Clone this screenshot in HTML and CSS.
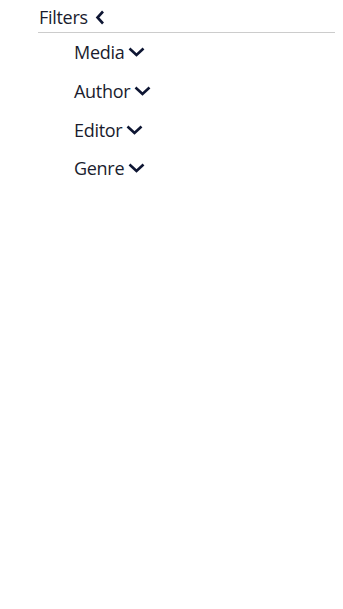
FILE: index.html
```html
<!DOCTYPE html>
<html lang="en">
<head>
<meta charset="utf-8">
<title>Filters</title>
<link rel="stylesheet" href="styles.css">
</head>
<body>
<nav class="filters">
  <div class="filters-head">
    <span class="label">Filters</span>
    <svg class="chev-left" width="10" height="15" viewBox="0 0 10 15"><path d="M8 1.5 L2.5 7.5 L8 13.5" fill="none" stroke="#0e1633" stroke-width="2.6"/></svg>
  </div>
  <ul class="filter-list">
    <li class="filter-item"><span class="label">Media</span><svg class="chev-down" width="17" height="10" viewBox="0 0 17 10"><path d="M1.5 1.5 L8.5 8 L15.5 1.5" fill="none" stroke="#0e1633" stroke-width="2.6"/></svg></li>
    <li class="filter-item"><span class="label">Author</span><svg class="chev-down" width="17" height="10" viewBox="0 0 17 10"><path d="M1.5 1.5 L8.5 8 L15.5 1.5" fill="none" stroke="#0e1633" stroke-width="2.6"/></svg></li>
    <li class="filter-item"><span class="label">Editor</span><svg class="chev-down" width="17" height="10" viewBox="0 0 17 10"><path d="M1.5 1.5 L8.5 8 L15.5 1.5" fill="none" stroke="#0e1633" stroke-width="2.6"/></svg></li>
    <li class="filter-item"><span class="label">Genre</span><svg class="chev-down" width="17" height="10" viewBox="0 0 17 10"><path d="M1.5 1.5 L8.5 8 L15.5 1.5" fill="none" stroke="#0e1633" stroke-width="2.6"/></svg></li>
  </ul>
</nav>
</body>
</html>
```
FILE: styles.css
```css
body {
  margin: 8px;
  background: #fff;
  font-family: "Open Sans", "Liberation Sans", sans-serif;
  color: #1a1c2e;
}
.filters {
  margin-left: 30px;
  width: 301px;
}
.filters-head {
  display: flex;
  align-items: center;
  gap: 7px;
  height: 18px;
  padding-bottom: 6px;
  border-bottom: 1px solid #cccccc;
  font-size: 18px;
  letter-spacing: -0.3px;
}
.filters-head .label {
  margin-left: 1px;
}
.filter-list {
  list-style: none;
  margin: 0;
  padding: 0 0 0 36px;
}
.filter-item {
  display: flex;
  align-items: center;
  gap: 4px;
  height: 38.7px;
  font-size: 18px;
  letter-spacing: -0.3px;
}
```
